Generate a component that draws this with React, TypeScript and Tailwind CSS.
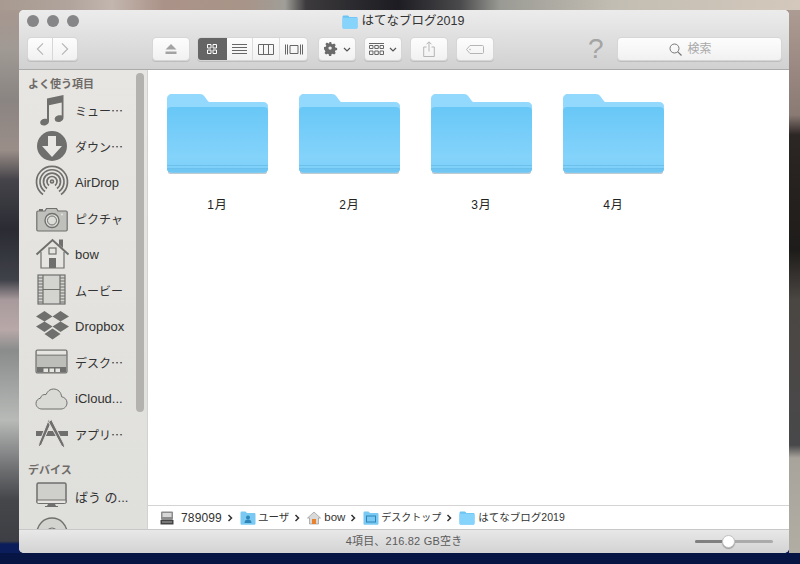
import type { ReactNode } from "react";

const jpFont = "font-['Liberation_Sans','Noto_Sans_CJK_JP',sans-serif]";

function FolderGlyph({ className }: { className?: string }) {
    return (
        <svg viewBox="0 0 16 14" className={className}>
            <path d="M.5 2.2C.5 1.2 1 .6 2 .6h3.600c.6 0 .9.3 1.200.7l.6.8h6.700c1 0 1.400.5 1.400 1.400v8.600c0 .9-.5 1.300-1.300 1.300H1.800c-.9 0-1.300-.4-1.300-1.300z" fill="#6cc4f3" />
            <path d="M.5 3.800c0-.7.4-1 1-1h13c.7 0 1 .3 1 1v8.700c0 .9-.5 1.300-1.300 1.300H1.800c-.9 0-1.300-.4-1.300-1.300z" fill="#86d3fb" />
        </svg>
    );
}

function BigFolder({ label }: { label: string }) {
    return (
        <div className="flex w-[132px] flex-col items-center">
            <svg viewBox="0 0 101 80" className="h-[80px] w-[101px]">
                <defs>
                    <linearGradient id="folderBody" x1="0" y1="0" x2="0" y2="1">
                        <stop offset="0" stopColor="#68c7f6" />
                        <stop offset="0.75" stopColor="#83d3fb" />
                        <stop offset="1" stopColor="#7fd0f9" />
                    </linearGradient>
                </defs>
                <path d="M1 77h99v1q0 2-3 2H4q-3 0-3-2z" fill="#bfcad1" />
                <path d="M0 5C0 2 2 0 5 0h28c2 0 3.200.7 4.200 2l3.300 4.500c.8 1 1.500 1.500 3 1.500H96c3 0 5 1.700 5 4.500V74c0 3-2 4.500-5 4.500H5c-3 0-5-1.500-5-4.500z" fill="#93d9fd" />
                <path d="M0 17c0-2.500 1.500-4 4-4h93c2.500 0 4 1.500 4 4v57c0 3-2 4.500-5 4.500H5c-3 0-5-1.500-5-4.500z" fill="url(#folderBody)" />
                <path d="M0 71h101v1H0zM0 74h101v1H0z" fill="#66bde9" opacity="0.8" />
                <path d="M0 75h101c0 2.500-2 3.500-5 3.500H5c-3 0-5-1-5-3.500z" fill="#6fc6f2" />
            </svg>
            <span className="mt-[23px] pl-[1px] text-[12px] leading-[16px] tracking-[1px] text-[#222]">{label}</span>
        </div>
    );
}

function ToolButton({ className, children }: { className: string; children: ReactNode }) {
    return (
        <div className={`flex h-[24px] items-center justify-center rounded-[4px] border border-[#d6d6d6] bg-gradient-to-b from-[#fdfdfd] to-[#f1f1f1] shadow-[0_1px_0_#bdbdbd] ${className}`}>
            {children}
        </div>
    );
}

function Chevron() {
    return (
        <svg viewBox="0 0 6 8" className="ml-[5px] mr-[7px] h-[8px] w-[6px] shrink-0">
            <path d="M1.500 1l3 3-3 3" fill="none" stroke="#333" strokeWidth="1.500" />
        </svg>
    );
}

const sidebarIcons: Record<string, ReactNode> = {
    music: (
        <path d="M13 6.500 29.500 3v22.500c0 2.800-2.700 4.500-5 4.500-2.400 0-3.800-1.300-3.800-3 0-2.400 2.700-3.800 5-3.800.7 0 1.400.1 2 .4V10.500L15 13.300V29c0 2.800-2.700 4.500-5 4.500-2.400 0-3.800-1.300-3.800-3 0-2.400 2.700-3.800 5-3.800.7 0 1.300.1 1.800.4z" fill="#6f6f6d" />
    ),
    download: (
        <g>
            <circle cx="18" cy="18" r="15" fill="#6f6f6d" />
            <path d="M14 8h8v10h6L18 29 8 18h6z" fill="#e9e8e5" />
        </g>
    ),
    airdrop: (
        <g fill="none" stroke="#6f6f6d" strokeWidth="1.700">
            <path d="M9 30.500a15.500 15.500 0 1 1 18 0" />
            <path d="M11 27.500a12 12 0 1 1 14 0" />
            <path d="M13 24.500a8.500 8.500 0 1 1 10 0" />
            <path d="M15 21.500a5 5 0 1 1 6 0" />
            <circle cx="18" cy="17.500" r="1.500" />
        </g>
    ),
    pictures: (
        <g>
            <path d="M4 11h7l1.500-2.500h10L24 11h8c.8 0 1.200.4 1.200 1.200v17.600c0 .8-.4 1.200-1.200 1.200H4c-.8 0-1.200-.4-1.200-1.200V12.200c0-.8.400-1.200 1.200-1.200z" fill="#bfbfbc" stroke="#6f6f6d" strokeWidth="1.200" />
            <rect x="5" y="9" width="4" height="2" fill="#6f6f6d" />
            <circle cx="18" cy="20.500" r="7" fill="#dcdcd9" stroke="#6f6f6d" strokeWidth="1.400" />
            <circle cx="18" cy="20.500" r="4.500" fill="none" stroke="#6f6f6d" strokeWidth="1" />
            <circle cx="28" cy="14.500" r="1" fill="#e6e5e2" />
        </g>
    ),
    home: (
        <g>
            <path d="M7 16v16h23V16" fill="#e6e5e2" stroke="#6f6f6d" strokeWidth="1.200" />
            <path d="M2.500 18.500 18.500 4l16 14.500" fill="none" stroke="#6f6f6d" strokeWidth="2" />
            <path d="M25 3.500h4v8.500l-4-3.600z" fill="#6f6f6d" />
            <rect x="15" y="12" width="7" height="6" fill="none" stroke="#6f6f6d" strokeWidth="1.200" />
            <rect x="15" y="22" width="7" height="10" fill="#6f6f6d" />
        </g>
    ),
    movie: (
        <g>
            <rect x="4" y="3" width="27" height="29" fill="#d3d3d0" stroke="#6f6f6d" strokeWidth="1.200" />
            <path d="M9 3v29M26 3v29M9 17.500h17" stroke="#6f6f6d" strokeWidth="1.200" />
            <path d="M4 6h5M4 9h5M4 12h5M4 15h5M4 18h5M4 21h5M4 24h5M4 27h5M4 30h5M26 6h5M26 9h5M26 12h5M26 15h5M26 18h5M26 21h5M26 24h5M26 27h5M26 30h5" stroke="#6f6f6d" strokeWidth="1" />
        </g>
    ),
    dropbox: (
        <path d="M10.500 3 2 8.500l8.500 5 8-5zM26.500 3l-8 5.500 8 5 8.500-5zM2 18.500l8.500 5.500 8-5.500-8-5zM26.500 13.500l-8 5 8 5.500 8.500-5.500zM18.500 20.500 10.500 26l8 5.500 8-5.500z" fill="#6f6f6d" />
    ),
    desktop: (
        <g>
            <rect x="2" y="6" width="31" height="23" rx="1.500" fill="#bdbdba" stroke="#6f6f6d" strokeWidth="1.200" />
            <path d="M2.600 11h29.800" stroke="#6f6f6d" strokeWidth="1.200" />
            <rect x="3" y="7" width="29" height="3.500" fill="#e6e5e2" />
            <path d="M3 23h29v4.500c0 .6-.4 1-1 1H4c-.6 0-1-.4-1-1z" fill="#6f6f6d" />
            <path d="M9.500 24.500h4.500v3.500H9.500zM15.500 24.500H20v3.500h-4.500zM21.500 24.500H26v3.500h-4.500z" fill="#e6e5e2" />
        </g>
    ),
    icloud: (
        <path d="M8 29c-3.500 0-6-2.400-6-5.500 0-2.700 1.800-4.800 4.400-5.300C7 15.500 9.500 14 12 14.600 13.500 11 16.300 9 19.500 9c4.500 0 7.800 3.300 8 7.700 3.300.6 5.500 3 5.500 6.100 0 3.400-2.500 6.200-6 6.200z" fill="#d9d9d6" stroke="#6f6f6d" strokeWidth="1" />
    ),
    apps: (
        <g>
            <rect x="2" y="15" width="32" height="5" fill="#6f6f6d" />
            <path d="M14.500 3.500 5 27l-.6 4.500 3.300-3L17.500 6z" fill="#6f6f6d" stroke="#e3e2df" strokeWidth="1" />
            <path d="M17.500 3.500 30 28l.8 4.500-3.500-3L14.500 6z" fill="#6f6f6d" stroke="#e3e2df" strokeWidth="1" />
        </g>
    ),
    imac: (
        <g>
            <rect x="3" y="4" width="29" height="20" rx="1.500" fill="#cfcfcc" stroke="#6f6f6d" strokeWidth="1.500" />
            <path d="M3 21h29v2c0 1-.5 1.500-1.500 1.500h-26C3.500 24.500 3 24 3 23z" fill="#e6e5e2" stroke="#6f6f6d" strokeWidth="1" />
            <path d="M14 25h7l1 2h2v1H11v-1h2z" fill="#6f6f6d" />
        </g>
    ),
    disc: (
        <g>
            <circle cx="18" cy="18" r="15" fill="#d3d3d0" stroke="#6f6f6d" strokeWidth="1.400" />
            <circle cx="18" cy="18" r="5" fill="#e6e5e2" stroke="#6f6f6d" strokeWidth="1.200" />
        </g>
    ),
};

function SidebarItem({ icon, label, jp }: { icon: string; label: string; jp?: boolean }) {
    return (
        <div className="flex h-[36px] shrink-0 items-center pl-[15px]">
            <svg viewBox="0 0 36 36" className="h-[36px] w-[36px] shrink-0 -translate-y-px">
                {sidebarIcons[icon]}
            </svg>
            {jp ? (
                <span className="ml-[5px] whitespace-nowrap font-['Noto_Sans_CJK_JP',sans-serif] text-[12px] text-[#333]">{label}</span>
            ) : (
                <span className="ml-[5px] whitespace-nowrap text-[13px] text-[#333]">{label}</span>
            )}
        </div>
    );
}

function Sidebar() {
    return (
        <div className="relative flex w-[129px] shrink-0 flex-col overflow-hidden border-r border-[#d2d2d0] bg-gradient-to-b from-[#e8e6e2] to-[#dfdfdb]">
            <div className="ml-[9px] mt-[6px] h-[16px] text-[11px] font-bold leading-[16px] text-[#6e6b69]">よく使う項目</div>
            <div className="mt-[1px] flex flex-col">
                <SidebarItem icon="music" label="ミュー…" jp />
                <SidebarItem icon="download" label="ダウン…" jp />
                <SidebarItem icon="airdrop" label="AirDrop" />
                <SidebarItem icon="pictures" label="ピクチャ" jp />
                <SidebarItem icon="home" label="bow" />
                <SidebarItem icon="movie" label="ムービー" jp />
                <SidebarItem icon="dropbox" label="Dropbox" />
                <SidebarItem icon="desktop" label="デスク…" jp />
                <SidebarItem icon="icloud" label="iCloud..." />
                <SidebarItem icon="apps" label="アプリ…" jp />
            </div>
            <div className="ml-[9px] mt-[9px] h-[16px] text-[11px] font-bold leading-[16px] text-[#6e6b69]">デバイス</div>
            <div className="mt-[2px] flex flex-col">
                <SidebarItem icon="imac" label="ばう の..." />
                <SidebarItem icon="disc" label="リモー…" jp />
            </div>
            <div className="absolute left-[117px] top-[3px] h-[339px] w-[8px] rounded-full bg-[#b4b2ae]" />
        </div>
    );
}

export default function App() {
    return (
        <div
            lang="ja"
            className={`h-[564px] w-[800px] overflow-hidden bg-[linear-gradient(90deg,#a89a90_0px,#b0a49c_70px,#c2b6ae_112px,#ab9288_163px,#a89488_245px,#a09e98_285px,#3c3a3c_306px,#1c1c22_398px,#4a4a4c_460px,#9a9a94_500px,#c2bdb2_612px,#d4c8bc_800px),linear-gradient(90deg,#071544,#071544),linear-gradient(180deg,#b09f96_0px,#8a7a74_115px,#2c2624_135px,#1e1c1a_250px,#4a4642_300px,#4a4848_400px,#48484a_445px,#a8a49c_458px,#b2aea4_564px),linear-gradient(180deg,#a8968e_0px,#a09a94_50px,#8a8482_100px,#9a8e88_150px,#45444a_180px,#2a2b33_230px,#40424a_280px,#a89a9c_300px,#b8a8a8_330px,#8a8c8c_350px,#b8bab8_420px,#6c6e70_470px,#45464a_500px,#3e3f44_541px,#0b1d5a_544px,#0b1d5a_564px)] bg-size-[100%_10px,100%_11px,11px_100%,100%_100%] bg-position-[0_0,0_100%,100%_0,0_0] bg-no-repeat pl-[19px] pt-[10px] ${jpFont}`}
        >
            <div className="flex h-[543px] w-[770px] flex-col overflow-hidden rounded-[5px] bg-white">
                {/* title bar + toolbar */}
                <div className="h-[60px] shrink-0 border-b border-[#ababab] bg-gradient-to-b from-[#ececec] to-[#d1d1d1]">
                    <div className="relative flex h-[23px] items-center justify-center pr-[2px]">
                        <div className="absolute left-[8px] top-[5px] flex gap-[8px]">
                            <div className="h-[12px] w-[12px] rounded-full bg-[#868587]" />
                            <div className="h-[12px] w-[12px] rounded-full bg-[#868587]" />
                            <div className="h-[12px] w-[12px] rounded-full bg-[#868587]" />
                        </div>
                        <FolderGlyph className="h-[14px] w-[16px]" />
                        <span className="ml-[4px] text-[12.5px] text-[#333]">はてなブログ2019</span>
                    </div>
                    <div className="mt-[4px] flex h-[24px] items-center pl-[8px]">
                        <ToolButton className="w-[26px] rounded-r-none">
                            <svg viewBox="0 0 10 16" className="h-[14px] w-[10px]"><path d="M8.500 1.500 2 8l6.500 6.500" fill="none" stroke="#b5b5b5" strokeWidth="1.300" /></svg>
                        </ToolButton>
                        <ToolButton className="ml-[-1px] w-[26px] rounded-l-none">
                            <svg viewBox="0 0 10 16" className="h-[14px] w-[10px]"><path d="M1.500 1.500 8 8l-6.500 6.500" fill="none" stroke="#b5b5b5" strokeWidth="1.300" /></svg>
                        </ToolButton>
                        <ToolButton className="ml-[74px] w-[38px]">
                            <svg viewBox="0 0 12 10" className="h-[10px] w-[12px]"><path d="M6 0l5.500 5.500H.5zM.5 7.500h11V10H.5z" fill="#a3a3a3" /></svg>
                        </ToolButton>
                        <div className="ml-[7px] flex h-[24px] w-[111px] overflow-hidden rounded-[4px] border border-[#d6d6d6] bg-gradient-to-b from-[#fdfdfd] to-[#f1f1f1] shadow-[0_1px_0_#bdbdbd]">
                            <div className="-ml-px -mt-px flex h-[24px] w-[30px] items-center justify-center bg-[#666565]">
                                <svg viewBox="0 0 10 10" className="h-[10px] w-[10px]"><path d="M.5.500h3.500v3.500H.5zM6 .500h3.500v3.500H6zM.5 6h3.500v3.500H.5zM6 6h3.500v3.500H6z" fill="none" stroke="#fff" strokeWidth="1" /></svg>
                            </div>
                            <div className="flex w-[26px] items-center justify-center border-r border-[#dcdcdc]">
                                <svg viewBox="0 0 15 11" className="h-[11px] w-[15px]"><path d="M0 .500h15M0 3.500h15M0 6.500h15M0 9.500h15" stroke="#666" strokeWidth="1" /></svg>
                            </div>
                            <div className="flex w-[27px] items-center justify-center border-r border-[#dcdcdc]">
                                <svg viewBox="0 0 16 11" className="h-[11px] w-[16px]"><path d="M.5.500h15v10H.5zM5.500.500v10M10.500.500v10" fill="none" stroke="#666" strokeWidth="1" /></svg>
                            </div>
                            <div className="flex flex-1 items-center justify-center">
                                <svg viewBox="0 0 18 11" className="h-[11px] w-[18px]"><path d="M5 1.500h8v8H5zM.5.500v10M2.500.500v10M15.500.500v10M17.500.500v10" fill="none" stroke="#666" strokeWidth="1" /></svg>
                            </div>
                        </div>
                        <ToolButton className="ml-[10px] w-[38px] gap-[5px]">
                            <svg viewBox="0 0 14 14" className="h-[14px] w-[14px]"><path d="M5.800 0h2.400l.4 2 1.300.6 1.800-1 1.700 1.700-1 1.800.5 1.300 2.100.4v2.400l-2 .4-.6 1.300 1 1.800-1.700 1.700-1.800-1-1.300.5-.4 2.100H5.800l-.4-2-1.300-.6-1.800 1-1.700-1.700 1-1.800-.5-1.300L0 8.200V5.800l2-.4.600-1.300-1-1.800 1.700-1.700 1.800 1 1.300-.5z" transform="scale(.875)" fill="#6a6a6a" /><circle cx="6.100" cy="6.100" r="1.700" fill="#eee" /></svg>
                            <svg viewBox="0 0 8 5" className="h-[5px] w-[8px]"><path d="M1 1l3 3 3-3" fill="none" stroke="#555" strokeWidth="1.200" /></svg>
                        </ToolButton>
                        <ToolButton className="ml-[8px] w-[38px] gap-[5px]">
                            <svg viewBox="0 0 15 12" className="h-[12px] w-[15px]"><path d="M0 .500h15" stroke="#666" /><path d="M.5 2.500h3.500v3H.5zM5.800 2.500h3.500v3H5.800zM11 2.500h3.500v3H11zM.5 8h3.500v3.500H.5zM5.800 8h3.500v3.500H5.800zM11 8h3.500v3.500H11z" fill="none" stroke="#666" /></svg>
                            <svg viewBox="0 0 8 5" className="h-[5px] w-[8px]"><path d="M1 1l3 3 3-3" fill="none" stroke="#555" strokeWidth="1.200" /></svg>
                        </ToolButton>
                        <ToolButton className="ml-[8px] w-[38px]">
                            <svg viewBox="0 0 12 16" className="h-[16px] w-[12px]"><path d="M3.500 6H.7v9.500h10.600V6H8.500M6 10.500V1M3.500 3.300 6 .8l2.500 2.500" fill="none" stroke="#b5b5b5" strokeWidth="1" /></svg>
                        </ToolButton>
                        <ToolButton className="ml-[8px] w-[38px]">
                            <svg viewBox="0 0 18 9" className="h-[9px] w-[18px]"><path d="M4 .500h12.500c.6 0 1 .4 1 1v6c0 .6-.4 1-1 1H4L.5 4.500z" fill="none" stroke="#b5b5b5" /><circle cx="4" cy="4.500" r=".8" fill="#b5b5b5" /></svg>
                        </ToolButton>
                        <span className="ml-[94px] w-[16px] font-['Liberation_Sans',sans-serif] text-[28px] leading-[24px] text-[#a4a4a4]">?</span>
                        <ToolButton className="ml-[13px] w-[165px] gap-[5px] pr-[18px]">
                            <svg viewBox="0 0 13 13" className="h-[13px] w-[13px]"><circle cx="5.500" cy="5.500" r="4.500" fill="none" stroke="#777" strokeWidth="1" /><path d="M8.800 8.800 12.500 12.500" stroke="#777" strokeWidth="1.200" /></svg>
                            <span className="text-[12px] text-[#a9a9a9]">検索</span>
                        </ToolButton>
                    </div>
                </div>
                {/* content */}
                <div className="flex min-h-0 flex-1">
                    <Sidebar />
                    <div className="flex min-w-0 flex-1 flex-col">
                        <div className="flex flex-1 pl-[3px] pt-[24px]">
                            <BigFolder label="1月" />
                            <BigFolder label="2月" />
                            <BigFolder label="3月" />
                            <BigFolder label="4月" />
                        </div>
                        <div className="flex h-[24px] shrink-0 items-center border-t border-[#d4d4d4] pl-[12px] text-[11.5px] text-[#333]">
                            <svg viewBox="0 0 14 14" className="h-[14px] w-[14px] shrink-0"><rect x="1" y="0.500" width="12" height="8.500" rx="1" fill="#8c8c8c" /><rect x="2.500" y="2" width="9" height="4" fill="#d7d7d7" /><rect x="0.500" y="9" width="13" height="4.500" fill="#444" /><rect x="2" y="10.500" width="10" height="1" fill="#aaa" /></svg>
                            <span className="ml-[7px] text-[12px] tracking-[0.15px]">789099</span>
                            <Chevron />
                            <svg viewBox="0 0 16 14" className="h-[14px] w-[16px] shrink-0"><path d="M.5 2C.5 1 1 .6 2 .6h3.500l1.500 1.500h7c1 0 1.500.5 1.500 1.400v8.900c0 .9-.5 1.300-1.300 1.300H1.800c-.9 0-1.300-.4-1.300-1.300z" fill="#79c9f2" /><circle cx="8" cy="6.500" r="2" fill="#2e86b8" /><path d="M4.500 12c0-2.500 1.500-3.500 3.500-3.500s3.500 1 3.500 3.500z" fill="#2e86b8" /></svg>
                            <span className="ml-[2px] text-[10.5px]">ユーザ</span>
                            <Chevron />
                            <svg viewBox="0 0 14 14" className="h-[14px] w-[14px] shrink-0"><path d="M7 1 .5 7h2v6h9V7h2z" fill="#d9d9d9" stroke="#8a8a8a" strokeWidth=".6" /><rect x="5" y="8" width="4" height="5" fill="#e8822c" /></svg>
                            <span className="ml-[3px]">bow</span>
                            <Chevron />
                            <svg viewBox="0 0 16 14" className="h-[14px] w-[16px] shrink-0"><path d="M.5 2C.5 1 1 .6 2 .6h3.500l1.500 1.500h7c1 0 1.500.5 1.500 1.400v8.900c0 .9-.5 1.300-1.300 1.300H1.800c-.9 0-1.300-.4-1.300-1.300z" fill="#79c9f2" /><rect x="3.500" y="5" width="9" height="6" fill="none" stroke="#2e86b8" /></svg>
                            <span className="ml-[2px] text-[10px]">デスクトップ</span>
                            <Chevron />
                            <FolderGlyph className="h-[14px] w-[16px] shrink-0" />
                            <span className="ml-[3px] text-[10.5px]">はてなブログ2019</span>
                        </div>
                    </div>
                </div>
                {/* status bar */}
                <div className="relative flex h-[24px] shrink-0 items-center justify-center border-t border-[#c8c8c8] bg-gradient-to-b from-[#e9e8e9] to-[#d3d3d3] text-[11px] tracking-[0.2px] text-[#5b5b5b]">
                    <span>4項目、216.82 GB空き</span>
                    <div className="absolute left-[676px] top-[10px] flex h-[3px] w-[78px] overflow-hidden rounded-full bg-[#ababab]">
                        <div className="h-full w-[33px] bg-[#808080]" />
                    </div>
                    <div className="absolute left-[703px] top-[5px] h-[13px] w-[13px] rounded-full border border-[#c2c2c2] bg-white shadow-[0_1px_1px_#999]" />
                </div>
            </div>
        </div>
    );
}
